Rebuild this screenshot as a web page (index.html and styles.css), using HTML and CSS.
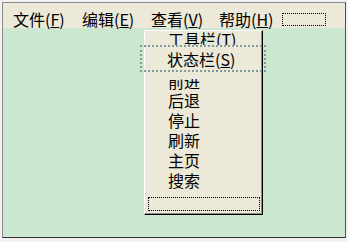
FILE: index.html
```html
<!DOCTYPE html>
<html lang="zh-CN">
<head>
  <meta charset="UTF-8">
  <title>查看菜单</title>
  <link rel="stylesheet" href="styles.css">
</head>
<body>
  <div class="window">
    <div class="menubar">
      <span class="menu-item">文件(<u>F</u>)</span>
      <span class="menu-item">编辑(<u>E</u>)</span>
      <span class="menu-item">查看(<u>V</u>)</span>
      <span class="menu-item">帮助(<u>H</u>)</span>
      <span class="menu-slot"></span>
    </div>

    <div class="dropdown">
      <div class="item item-cut-top"><span>工具栏(<u>T</u>)</span></div>
      <div class="item item-focus">状态栏(<u>S</u>)</div>
      <div class="item item-cut"><span>前进</span></div>
      <div class="item">后退</div>
      <div class="item">停止</div>
      <div class="item">刷新</div>
      <div class="item">主页</div>
      <div class="item">搜索</div>
      <div class="item-empty"></div>
    </div>
  </div>
</body>
</html>
```

FILE: styles.css
```css
body {
  margin: 0;
  background: #f2f2f2;
  font-family: "Noto Sans CJK SC", "Noto Sans", sans-serif;
  font-size: 16px;
  color: #000;
}

.window {
  position: relative;
  margin: 2px 0 0 2px;
  width: 344px;
  height: 236px;
  box-sizing: border-box;
  border: 1px solid #8a8a8a;
  border-right-color: #505050;
  border-bottom-color: #303030;
  background: #cbe7cf;
}

.menubar {
  display: grid;
  grid-template-columns: 69px 69px 68px 63px 44px;
  height: 25px;
  box-sizing: border-box;
  padding: 6px 0 0 10px;
  background: #ece9d8;
  line-height: 20px;
  white-space: nowrap;
}

.menu-slot {
  align-self: start;
  margin-top: 4px;
  height: 13px;
  box-sizing: border-box;
  border: 1px dotted #000;
}

.dropdown {
  position: absolute;
  left: 141px;
  top: 27px;
  width: 119px;
  height: 185px;
  box-sizing: border-box;
  border: 1px solid;
  border-color: #fff #000 #000 #fff;
  box-shadow: inset -1px -1px #8a8a8a;
  background: #ece9d8;
}

.item {
  padding-left: 23px;
  line-height: 20px;
  white-space: nowrap;
}

.item-cut-top {
  height: 14px;
  overflow: hidden;
}

.item-cut-top span {
  display: block;
  margin-top: -2px;
}

.item-focus {
  height: 27px;
  box-sizing: border-box;
  margin: 0 -4px 0 -5px;
  padding: 2px 0 0 25px;
  line-height: 21px;
  border: 2px dotted #7f9a98;
}

.item-cut {
  margin-top: 7px;
  height: 11px;
  overflow: hidden;
}

.item-cut span {
  display: block;
  margin-top: -8px;
}

.item-empty {
  margin: 7px 0 0 3px;
  width: 112px;
  height: 14px;
  box-sizing: border-box;
  border: 1px dotted #000;
}
```
